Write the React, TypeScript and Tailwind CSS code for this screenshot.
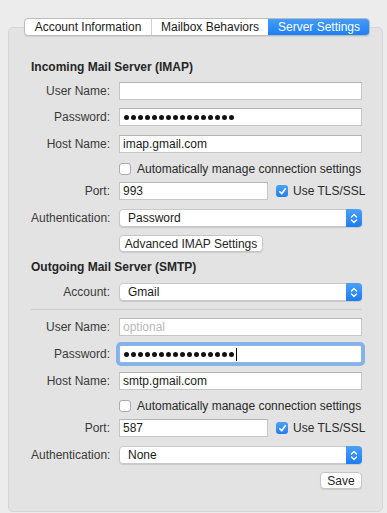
import React from "react";

const Label: React.FC<{ text?: string }> = ({ text }) => (
  <span className="w-[79px] shrink-0 text-right text-[#3a3a3a]">{text}</span>
);

const Row: React.FC<{ label?: string; className?: string; children: React.ReactNode }> = ({
  label,
  className = "",
  children,
}) => (
  <div className={`flex items-center gap-[9px] h-[18px] ${className}`}>
    <Label text={label} />
    {children}
  </div>
);

const Field: React.FC<{ children?: React.ReactNode; width?: string; muted?: boolean }> = ({
  children,
  width = "w-[243px]",
  muted,
}) => (
  <div
    className={`${width} h-[18px] bg-white border border-[#c6c6c6] border-t-[#b5b5b5] pl-[3px] flex items-center leading-none ${
      muted ? "text-[#b9b9b9]" : "text-[#1c1c1c]"
    }`}
  >
    {children}
  </div>
);

const Dots: React.FC = () => (
  <div className="flex items-center gap-[2px] pl-[1px]">
    {Array.from({ length: 16 }).map((_, i) => (
      <span key={i} className="w-[5px] h-[5px] rounded-full bg-[#111]" />
    ))}
  </div>
);

const Checkbox: React.FC<{ checked?: boolean }> = ({ checked }) =>
  checked ? (
    <span className="w-[12px] h-[12px] rounded-[3px] bg-gradient-to-b from-[#4da2fb] to-[#1f7ef4] flex items-center justify-center">
      <svg width="9" height="9" viewBox="0 0 9 9">
        <path d="M1.8 4.8 L3.7 6.8 L7.3 1.8" fill="none" stroke="white" strokeWidth="1.6" strokeLinecap="round" strokeLinejoin="round" />
      </svg>
    </span>
  ) : (
    <span className="w-[12px] h-[12px] rounded-[3px] bg-white border border-[#ababab]" />
  );

const Select: React.FC<{ value: string }> = ({ value }) => (
  <div className="w-[243px] h-[18px] flex rounded-[4px] bg-white border border-[#c9c9c9] shadow-[0_1px_1px_rgba(0,0,0,0.12)]">
    <span className="flex-1 pl-[8px] flex items-center leading-none text-[#1c1c1c]">{value}</span>
    <span className="w-[16px] -my-px -mr-px rounded-r-[4px] bg-gradient-to-b from-[#4aa0fb] to-[#1b7cf4] flex items-center justify-center">
      <svg width="8" height="11" viewBox="0 0 8 11">
        <path d="M1.5 4 L4 1.5 L6.5 4 M1.5 7 L4 9.5 L6.5 7" fill="none" stroke="white" strokeWidth="1.3" strokeLinecap="round" strokeLinejoin="round" />
      </svg>
    </span>
  </div>
);

const Button: React.FC<{ children: React.ReactNode; width: string }> = ({ children, width }) => (
  <div
    className={`${width} h-[17px] rounded-[4px] bg-white border border-[#c6c6c6] shadow-[0_1px_1px_rgba(0,0,0,0.1)] flex items-center justify-center leading-none text-[#262626]`}
  >
    {children}
  </div>
);

const App: React.FC = () => {
  return (
    <div className="w-[387px] h-[513px] bg-[#ececec] pt-[18px] font-['Liberation_Sans',Arial,sans-serif] text-[12px] overflow-hidden">
      <div className="relative z-10 ml-[24px] w-[346px] h-[18px] flex rounded-[4px] border border-[#bcbcbc] bg-white overflow-hidden shadow-[0_1px_1px_rgba(0,0,0,0.08)]">
        <span className="w-[127px] border-r border-[#d3d3d3] flex items-center justify-center text-[#1a1a1a]">
          Account Information
        </span>
        <span className="w-[116px] flex items-center justify-center text-[#1a1a1a]">Mailbox Behaviors</span>
        <span className="flex-1 -my-px -mr-px bg-gradient-to-b from-[#459ffc] to-[#1a7cf5] flex items-center justify-center text-white">
          Server Settings
        </span>
      </div>

      <div className="ml-[8px] -mt-[9px] w-[375px] h-[485px] rounded-[5px] bg-[#e3e3e3] border border-[#d6d6d6] pt-[32px] pl-[22px]">
        <div className="h-[15px] leading-[15px] font-bold text-[#262626]">Incoming Mail Server (IMAP)</div>

        <Row label="User Name:" className="mt-[7px]">
          <Field />
        </Row>
        <Row label="Password:" className="mt-[8px]">
          <Field>
            <Dots />
          </Field>
        </Row>
        <Row label="Host Name:" className="mt-[9px]">
          <Field>imap.gmail.com</Field>
        </Row>
        <div className="flex items-center gap-[9px] h-[13px] mt-[9px]">
          <Label />
          <Checkbox />
          <span className="-ml-[3px] text-[#2a2a2a]">Automatically manage connection settings</span>
        </div>
        <Row label="Port:" className="mt-[7px]">
          <Field width="w-[149px]">993</Field>
          <div className="flex items-center gap-[5px] -ml-[1px]">
            <Checkbox checked />
            <span className="text-[#2a2a2a]">Use TLS/SSL</span>
          </div>
        </Row>
        <Row label="Authentication:" className="mt-[9px]">
          <Select value="Password" />
        </Row>
        <div className="flex items-center gap-[9px] mt-[8px]">
          <Label />
          <Button width="w-[144px]">Advanced IMAP Settings</Button>
        </div>

        <div className="mt-[8px] h-[15px] leading-[15px] font-bold text-[#262626]">Outgoing Mail Server (SMTP)</div>
        <Row label="Account:" className="mt-[8px]">
          <Select value="Gmail" />
        </Row>
        <div className="mt-[8px] w-[331px] h-px bg-[#cdcdcd]" />

        <Row label="User Name:" className="mt-[8px]">
          <Field muted>optional</Field>
        </Row>
        <Row label="Password:" className="mt-[9px]">
          <div className="w-[243px] h-[18px] bg-white border border-[#8fb6e6] pl-[3px] flex items-center ring-[3px] ring-[#84b3ea] rounded-[2px]">
            <Dots />
            <span className="ml-[2px] w-px h-[13px] bg-black" />
          </div>
        </Row>
        <Row label="Host Name:" className="mt-[9px]">
          <Field>smtp.gmail.com</Field>
        </Row>
        <div className="flex items-center gap-[9px] h-[13px] mt-[9px]">
          <Label />
          <Checkbox />
          <span className="-ml-[3px] text-[#2a2a2a]">Automatically manage connection settings</span>
        </div>
        <Row label="Port:" className="mt-[7px]">
          <Field width="w-[149px]">587</Field>
          <div className="flex items-center gap-[5px] -ml-[1px]">
            <Checkbox checked />
            <span className="text-[#2a2a2a]">Use TLS/SSL</span>
          </div>
        </Row>
        <Row label="Authentication:" className="mt-[9px]">
          <Select value="None" />
        </Row>
        <div className="mt-[8px] w-[331px] flex justify-end">
          <Button width="w-[42px]">Save</Button>
        </div>
      </div>
    </div>
  );
};

export default App;
